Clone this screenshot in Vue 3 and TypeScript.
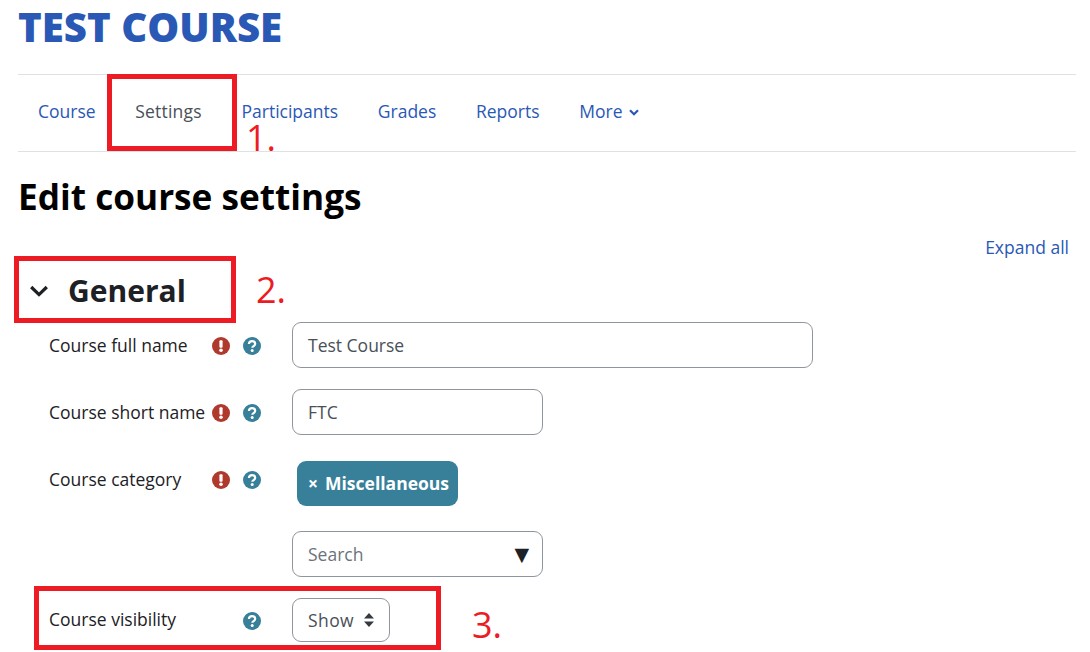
<template>
  <div class="page">
    <h1 class="course-title">TEST COURSE</h1>

    <nav class="tabs">
      <a v-for="tab in tabs" :key="tab" class="tab" :class="{ active: tab === 'Settings' }">{{ tab }}</a>
      <a class="tab more">
        More
        <svg class="more-caret" viewBox="0 0 10 7" width="10" height="7">
          <path d="M1 1.2 5 5.2 9 1.2" fill="none" stroke="currentColor" stroke-width="2.2" />
        </svg>
      </a>
    </nav>

    <h2 class="page-heading">Edit course settings</h2>

    <div class="expand-row"><a class="expand-link">Expand all</a></div>

    <div class="section-head">
      <svg class="section-caret" viewBox="0 0 18 12" width="18" height="12">
        <path d="M1.2 2 9 9.6 16.8 2" fill="none" stroke="currentColor" stroke-width="3.2" />
      </svg>
      <h3 class="section-title">General</h3>
    </div>

    <div class="form">
      <div v-for="row in rows" :key="row.label" class="row" :class="{ compact: row.kind === 'select' }">
        <label class="row-label">{{ row.label }}</label>
        <span class="row-icons">
          <svg v-if="row.required" class="icon" viewBox="0 0 18 18" width="18" height="18">
            <circle cx="9" cy="9" r="9" fill="#b0392d" />
            <rect x="7.4" y="3.2" width="3.2" height="7.6" rx="1" fill="#fff" />
            <circle cx="9" cy="13.2" r="1.8" fill="#fff" />
          </svg>
          <span v-else class="icon-gap"></span>
          <svg class="icon" viewBox="0 0 18 18" width="18" height="18">
            <circle cx="9" cy="9" r="9" fill="#38809a" />
            <path d="M5.9 7C6 5.2 7.3 4.2 9.1 4.2c1.8 0 3.1 1 3.1 2.6 0 2.4-2.9 2.2-2.9 4" fill="none" stroke="#fff" stroke-width="2.2" />
            <circle cx="9.2" cy="13.6" r="1.5" fill="#fff" />
          </svg>
        </span>
        <div v-if="row.kind === 'text'" class="input" :class="row.size">{{ row.value }}</div>
        <div v-else-if="row.kind === 'select'" class="input select-show">
          <span class="select-value">{{ row.value }}</span>
          <svg class="sort" viewBox="0 0 10 14" width="10" height="14">
            <path d="M5 0 10 5.4H0ZM5 14 0 8.6H10Z" fill="#343a40" />
          </svg>
        </div>
        <div v-else class="autocomplete">
          <span class="badge"><span class="badge-x">×</span>Miscellaneous</span>
          <div class="input medium search">
            <span class="placeholder">Search</span>
            <span class="down-arrow">▼</span>
          </div>
        </div>
      </div>
    </div>

    <!-- red annotations on top of the screenshot -->
    <div class="mark mark-settings"></div>
    <span class="mark-num num-1">1.</span>
    <div class="mark mark-general"></div>
    <span class="mark-num num-2">2.</span>
    <div class="mark mark-visibility"></div>
    <span class="mark-num num-3">3.</span>
  </div>
</template>

<script setup lang="ts">
interface FormRow {
  label: string;
  required: boolean;
  kind: 'text' | 'category' | 'select';
  value?: string;
  size?: string;
}

const tabs = ['Course', 'Settings', 'Participants', 'Grades', 'Reports'];

const rows: FormRow[] = [
  { label: 'Course full name', required: true, kind: 'text', value: 'Test Course', size: 'wide' },
  { label: 'Course short name', required: true, kind: 'text', value: 'FTC', size: 'medium' },
  { label: 'Course category', required: true, kind: 'category' },
  { label: 'Course visibility', required: false, kind: 'select', value: 'Show' },
];
</script>

<style>
html,
body {
  margin: 0;
  background: #fff;
  overflow: hidden;
}
</style>

<style scoped>
.page {
  position: relative;
  width: 1090px;
  height: 652px;
  padding-left: 18px;
  box-sizing: border-box;
  overflow: hidden;
  font-family: "Open Sans", "Noto Sans", sans-serif;
  font-size: 17.5px;
  color: #1d2125;
}

.course-title {
  margin: 0;
  height: 74px;
  padding-top: 4px;
  box-sizing: border-box;
  font-size: 40.2px;
  line-height: 46px;
  font-weight: 800;
  color: #2a58b5;
}

.tabs {
  display: flex;
  align-items: center;
  height: 78px;
  width: 1058px;
  box-sizing: border-box;
  padding: 0 0 4px 20px;
  gap: 39.7px;
  border-top: 1px solid #dee2e6;
  border-bottom: 1px solid #dee2e6;
  color: #2a58b5;
}

.tab.active {
  color: #495057;
  letter-spacing: 0.2px;
}

.more-caret {
  margin-left: 2px;
  vertical-align: 2px;
}

.page-heading {
  margin: 21px 0 0;
  font-size: 35.2px;
  line-height: 46px;
  font-weight: 700;
  color: #000;
}

.expand-row {
  width: 1051px;
  margin-top: 16px;
  height: 24px;
  line-height: 24px;
  text-align: right;
  color: #2a58b5;
}

.section-head {
  display: flex;
  align-items: center;
  height: 44px;
  margin-top: 10px;
  padding-left: 12px;
  gap: 20px;
  color: #1d2125;
}

.section-title {
  margin: 0;
  font-size: 30px;
  line-height: 44px;
  font-weight: 700;
}

.form {
  margin-top: 9px;
  padding-left: 31px;
  display: flex;
  flex-direction: column;
  gap: 21px;
}

.row {
  display: flex;
  align-items: flex-start;
}

.row-label {
  width: 163px;
  line-height: 46px;
  white-space: nowrap;
}

.row-icons {
  display: flex;
  align-items: center;
  box-sizing: border-box;
  height: 46px;
  padding-top: 2px;
  width: 80px;
  gap: 13px;
}

.compact .row-label {
  line-height: 42px;
}

.compact .row-icons {
  height: 44px;
}

.icon {
  flex: none;
}

.icon-gap {
  width: 18px;
}

.input {
  height: 46px;
  box-sizing: border-box;
  padding: 0 15px;
  line-height: 44px;
  border: 1px solid #8f959e;
  border-radius: 9px;
  color: #495057;
  background: #fff;
}

.wide {
  width: 521px;
}

.medium {
  width: 251px;
}

.autocomplete {
  display: flex;
  flex-direction: column;
  align-items: flex-start;
  gap: 25px;
}

.badge {
  display: block;
  margin: 5px 0 0 5px;
  height: 45px;
  line-height: 45px;
  padding: 0 9px 0 11px;
  border-radius: 9px;
  background: #38809a;
  color: #fff;
  font-weight: 700;
}

.badge-x {
  margin-right: 7px;
}

.search {
  display: flex;
  justify-content: space-between;
  align-items: center;
  padding-right: 13px;
}

.placeholder {
  color: #6a737b;
}

.down-arrow {
  font-family: "DejaVu Sans", sans-serif;
  font-size: 19px;
  color: #1d2125;
}

.select-show {
  display: flex;
  align-items: center;
  gap: 10px;
  width: 98px;
  height: 44px;
  line-height: 40px;
}

.select-value {
  letter-spacing: 0.4px;
}

/* red annotation boxes */
.mark {
  position: absolute;
  border: 5px solid #ed1c24;
  box-sizing: border-box;
}

.mark-settings {
  left: 107px;
  top: 74px;
  width: 130px;
  height: 77px;
}

.mark-general {
  left: 14px;
  top: 256px;
  width: 222px;
  height: 67px;
}

.mark-visibility {
  left: 34px;
  top: 586px;
  width: 407px;
  height: 64px;
}

.mark-num {
  position: absolute;
  color: #ed1c24;
  font-size: 36px;
  line-height: 44px;
}

.num-1 {
  left: 246px;
  top: 116px;
}

.num-2 {
  left: 256px;
  top: 268px;
}

.num-3 {
  left: 472px;
  top: 603px;
}
</style>
